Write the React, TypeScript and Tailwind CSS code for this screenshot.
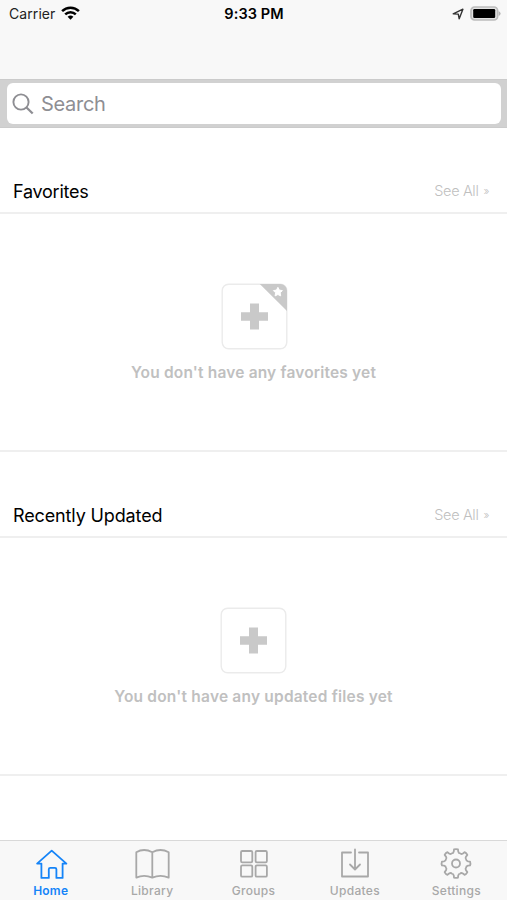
import React from 'react';

interface SectionProps {
  title: string;
  message: string;
  messageClass: string;
  titleClass: string;
  starred?: boolean;
}

interface TabProps {
  label: string;
  active?: boolean;
  children: React.ReactNode;
}

// Outline of an eight toothed cog centred on 16,16
const gearPath = () => {
  const at = (radius: number, deg: number) => {
    const rad = ((deg - 90) * Math.PI) / 180;
    return `${(16 + radius * Math.cos(rad)).toFixed(2)} ${(16 + radius * Math.sin(rad)).toFixed(2)}`;
  };
  let d = '';
  for (let i = 0; i < 8; i++) {
    const a = i * 45;
    d += `${i === 0 ? 'M' : 'L'}${at(14.2, a - 8)}Q${at(14.8, a)} ${at(14.2, a + 8)}L${at(12.2, a + 10.5)}`;
    d += `Q${at(10.4, a + 15)} ${at(10.9, a + 22.5)}Q${at(10.4, a + 30)} ${at(12.2, a + 34.5)}`;
    d += `L${at(14.2, a + 37)}`;
  }
  return `${d}Z`;
};

const StatusBar: React.FC = () => (
  <div className="flex h-7 items-center justify-between pl-[9px] pr-[6px]">
    <div className="flex w-[120px] items-center">
      <span className="text-[14px] leading-7 tracking-[0.08px] text-[#222]">Carrier</span>
      <svg className="-mt-[2px] ml-[6px] h-[14px] w-[19px]" viewBox="0 0 19 14">
        <path d="M9.5 13.7 6.6 10.8a4.2 4.2 0 0 1 5.8 0Z" fill="#000" />
        <path d="M4.2 8.4a7.6 7.6 0 0 1 10.6 0M1.1 5.1a12 12 0 0 1 16.8 0" fill="none" stroke="#000" strokeWidth="2.5" />
      </svg>
    </div>
    <span className="-ml-[2px] text-[14.5px] font-semibold leading-7 tracking-[0.1px] text-black">9:33 PM</span>
    <div className="flex w-[120px] items-center justify-end">
      <svg className="-mt-[1px] mr-[6px] h-3 w-3" viewBox="0 0 12 12">
        <path d="M1.2 5.9 10.9 1.2 7.2 10.8 6.3 6.1Z" fill="none" stroke="#333" strokeWidth="1.4" strokeLinejoin="round" />
      </svg>
      <svg className="-mt-[2px] h-[15px] w-[31px]" viewBox="0 0 31 15">
        <rect x="1" y="1" width="26.6" height="13" rx="3.6" fill="#e3e3e3" stroke="#bcbcbc" strokeWidth="1.7" />
        <rect x="3.2" y="3" width="22" height="9" rx="1.2" fill="#000" />
        <path d="M28.6 5v5q2-1 2-2.5T28.6 5Z" fill="#b5b5b5" />
      </svg>
    </div>
  </div>
);

const SearchBar: React.FC = () => (
  <div className="h-[49px] border-y border-[#cbcbcb] bg-[#d1d1d1] pb-[3px] pl-[7px] pr-[6px] pt-[3px]">
    <div className="flex h-[41px] items-center rounded-[6px] bg-white pl-[5px]">
      <svg className="h-[22px] w-[22px]" viewBox="0 0 22 22" fill="none" stroke="#8e8e93" strokeWidth="1.9">
        <circle cx="9" cy="9" r="7.6" />
        <path d="m14.5 14.5 6.2 6" strokeWidth="2.3" />
      </svg>
      <span className="ml-[7px] text-[20px] leading-6 tracking-[-0.3px] text-[#8e8e93]">Search</span>
    </div>
  </div>
);

const Section: React.FC<SectionProps> = ({ title, message, messageClass, titleClass, starred }) => (
  <section>
    <div className="flex h-[86px] items-end justify-between border-b-2 border-[#efefef] pb-[8px] pl-[13px] pr-[18px]">
      <h2 className={`text-[18px] leading-6 text-black ${titleClass}`}>{title}</h2>
      <span className="mb-[1px] flex text-[14.5px] font-light leading-6 tracking-[-0.35px] text-[#bfbfbf]">
        See All<span className="ml-[5px] text-[11px]">»</span>
      </span>
    </div>
    <div className="flex h-[238px] flex-col items-center border-b-2 border-[#efefef] pt-[69px]">
      <svg className={starred ? 'ml-[1px] h-[67px] w-[67px]' : 'h-[67px] w-[67px]'} viewBox="0 0 67 67">
        <rect x="1.2" y="1.2" width="64.6" height="64.6" rx="6.5" fill="#fff" stroke="#ebebeb" strokeWidth="1.4" />
        {starred && (
          <>
            <path d="M38.8 1H59.5a6.5 6.5 0 0 1 6.5 6.5V28Z" fill="#c9c9c9" />
            <path
              d="m56.9 4.3 1.4 2.8 3.1.5-2.2 2.2.5 3.1-2.8-1.4-2.8 1.4.5-3.1-2.2-2.2 3.1-.5Z"
              fill="#fff"
              stroke="#fff"
              strokeWidth="1"
              strokeLinejoin="round"
            />
          </>
        )}
        <path d="M29 20.5h9v8.7h9v8.6h-9v8.7h-9v-8.7h-9v-8.6h9Z" fill="#c9c9c9" />
      </svg>
      <p className={`mt-[11px] whitespace-nowrap text-[15.5px] font-semibold leading-6 text-[#c0c0c0] ${messageClass}`}>
        {message}
      </p>
    </div>
  </section>
);

const Tab: React.FC<TabProps> = ({ label, active, children }) => (
  <div className={`flex flex-1 flex-col items-center pt-[6px] ${active ? 'text-[#1584f8]' : 'text-[#a8a8a8]'}`}>
    <svg className="h-[34px] w-[36px]" viewBox="0 0 36 34" fill="none" stroke="currentColor" strokeWidth="1.8" strokeLinejoin="round" strokeLinecap="round">
      {children}
    </svg>
    <span className={`mt-[2px] text-[12px] leading-4 ${active ? 'font-semibold tracking-[0.2px]' : 'font-medium tracking-[0.3px]'}`}>
      {label}
    </span>
  </div>
);

const App: React.FC = () => (
  <div className="flex h-[900px] w-[507px] flex-col overflow-hidden bg-white font-['Inter',sans-serif]">
    <header className="h-[79px] bg-[#f8f8f8]">
      <StatusBar />
    </header>
    <SearchBar />
    <main className="flex-1">
      <Section
        title="Favorites"
        titleClass="tracking-[-0.25px]"
        message="You don't have any favorites yet"
        messageClass="tracking-[0.17px]"
        starred
      />
      <Section
        title="Recently Updated"
        titleClass="tracking-[-0.13px]"
        message="You don't have any updated files yet"
        messageClass="tracking-[0.2px]"
      />
    </main>
    <nav className="flex h-[60px] border-t border-[#d9d9d9] bg-[#f8f8f8]">
      <Tab label="Home" active>
        <path d="M18.7 3.6 33.4 16.6H29.6V30.9H23.4V22.3Q23.4 20.8 21.9 20.8H17.3Q15.8 20.8 15.8 22.3V30.9H8.4V16.6H4.1Z" />
      </Tab>
      <Tab label="Library">
        <path d="M18.3 5.2Q10 .8 2.3 5.2V30.6Q10 27 18.3 30.6Q26.5 27 34.7 30.6V5.2Q26.5 .8 18.3 5.2V30.6" />
      </Tab>
      <Tab label="Groups">
        <rect x="5" y="4" width="11.3" height="11.3" rx="1.3" />
        <rect x="19.6" y="4" width="11.3" height="11.3" rx="1.3" />
        <rect x="5" y="18.4" width="11.3" height="11.3" rx="1.3" />
        <rect x="19.6" y="18.4" width="11.3" height="11.3" rx="1.3" />
      </Tab>
      <Tab label="Updates">
        <path d="M14 5.5H5V29.5H31V5.5H22M18 2.5V22M13 17.5l5 5 5-5" />
      </Tab>
      <Tab label="Settings">
        <g transform="translate(2 .5)">
          <path d={gearPath()} />
          <circle cx="16" cy="16" r="4" />
        </g>
      </Tab>
    </nav>
  </div>
);

export default App;
